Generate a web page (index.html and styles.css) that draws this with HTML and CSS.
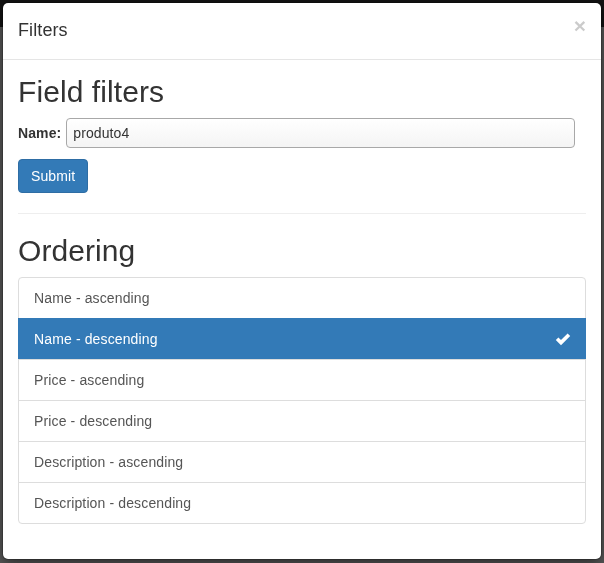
FILE: index.html
```html
<!DOCTYPE html>
<html>
<head>
<meta charset="utf-8">
<title>Filters</title>
<link rel="stylesheet" href="styles.css">
</head>
<body>
<div class="page">
  <div class="navbar"></div>
</div>
<div class="modal">
  <div class="modal-content">
    <div class="modal-header">
      <button class="close" type="button">&times;</button>
      <h4 class="modal-title">Filters</h4>
    </div>
    <div class="modal-body">
      <h2 class="first">Field filters</h2>
      <form class="filter-form">
        <p class="field"><label>Name:</label><input type="text" value="produto4"></p>
        <button class="btn btn-primary" type="button">Submit</button>
      </form>
      <hr>
      <h2>Ordering</h2>
      <div class="list-group">
        <a class="list-group-item">Name - ascending</a>
        <a class="list-group-item active">Name - descending
          <svg class="check" width="16" height="13" viewBox="0 0 16 13"><path d="M0.8 7 L3.4 4.4 L6 7 L12.6 0.4 L15.2 3 L6 12.2 Z" fill="#fff"/></svg>
        </a>
        <a class="list-group-item">Price - ascending</a>
        <a class="list-group-item">Price - descending</a>
        <a class="list-group-item">Description - ascending</a>
        <a class="list-group-item">Description - descending</a>
      </div>
    </div>
  </div>
</div>
</body>
</html>
```
FILE: styles.css
```css
* { box-sizing: border-box; }
html, body { margin: 0; padding: 0; }
body {
  background: #5b5b5b;
  font-family: "Liberation Sans", Arial, sans-serif;
  font-size: 14px;
  line-height: 1.42857;
  color: #333;
  width: 604px;
  height: 563px;
  overflow: hidden;
}
.page { height: 563px; }
.navbar { height: 27px; background: #131313; }

.modal {
  position: fixed;
  top: 2px;
  left: 2px;
  width: 600px;
}
.modal-content {
  background: #fff;
  border: 1px solid rgba(0,0,0,.2);
  border-radius: 6px;
  box-shadow: 0 5px 15px rgba(0,0,0,.5);
  background-clip: padding-box;
}
.modal-header {
  padding: 15px;
  border-bottom: 1px solid #e5e5e5;
}
.modal-title {
  margin: 0;
  font-size: 18px;
  font-weight: normal;
  line-height: 1.42857;
  color: #333;
  letter-spacing: 0.1px;
}
.close {
  float: right;
  margin-top: -3px;
  padding: 0;
  border: 0;
  background: transparent;
  font-family: "Liberation Sans", Arial, sans-serif;
  font-size: 21px;
  font-weight: bold;
  line-height: 1;
  color: #000;
  opacity: .2;
  text-shadow: 0 1px 0 #fff;
}
.modal-body { padding: 15px; }
h2 {
  font-size: 30px;
  font-weight: 500;
  line-height: 1.1;
  margin: 20px 0 10px;
  color: #333;
  letter-spacing: 0.08px;
}
h2.first { margin-top: 0; }
.filter-form {
  display: flex;
  flex-direction: column;
  align-items: flex-start;
  margin: 0;
}
.field {
  display: flex;
  align-items: center;
  gap: 5px;
  margin: 0 0 11px;
  height: 30px;
}
.field label { font-weight: bold; color: #333; padding-top: 2px; letter-spacing: 0.1px; }
.field input {
  width: 509px;
  height: 30px;
  padding: 1px 6px 0;
  border: 1px solid #a8a8a8;
  border-radius: 4px;
  background: linear-gradient(to bottom, #ffffff, #f4f4f4);
  font-family: "Liberation Sans", Arial, sans-serif;
  font-size: 14px;
  color: #333;
  letter-spacing: 0.1px;
}
.btn {
  padding: 7px 12px 5px;
  font-family: "Liberation Sans", Arial, sans-serif;
  font-size: 14px;
  line-height: 1.42857;
  border: 1px solid transparent;
  border-radius: 4px;
  letter-spacing: 0.1px;
}
.btn-primary {
  color: #fff;
  background: #337ab7;
  border-color: #2e6da4;
}
hr {
  margin: 20px 0;
  border: 0;
  border-top: 1px solid #eee;
}
.list-group { margin-bottom: 20px; }
.list-group-item {
  display: flex;
  justify-content: space-between;
  align-items: center;
  padding: 11px 15px 9px;
  height: 42px;
  margin-bottom: -1px;
  border: 1px solid #ddd;
  color: #555;
  background: #fff;
  text-decoration: none;
  letter-spacing: 0.13px;
}
.list-group-item:first-child { border-top-left-radius: 4px; border-top-right-radius: 4px; }
.list-group-item:last-child { border-bottom-left-radius: 4px; border-bottom-right-radius: 4px; margin-bottom: 0; }
.list-group-item.active {
  background: #337ab7;
  border-color: #337ab7;
  color: #fff;
}
.check { margin-right: -1px; margin-top: -1px; }
```
